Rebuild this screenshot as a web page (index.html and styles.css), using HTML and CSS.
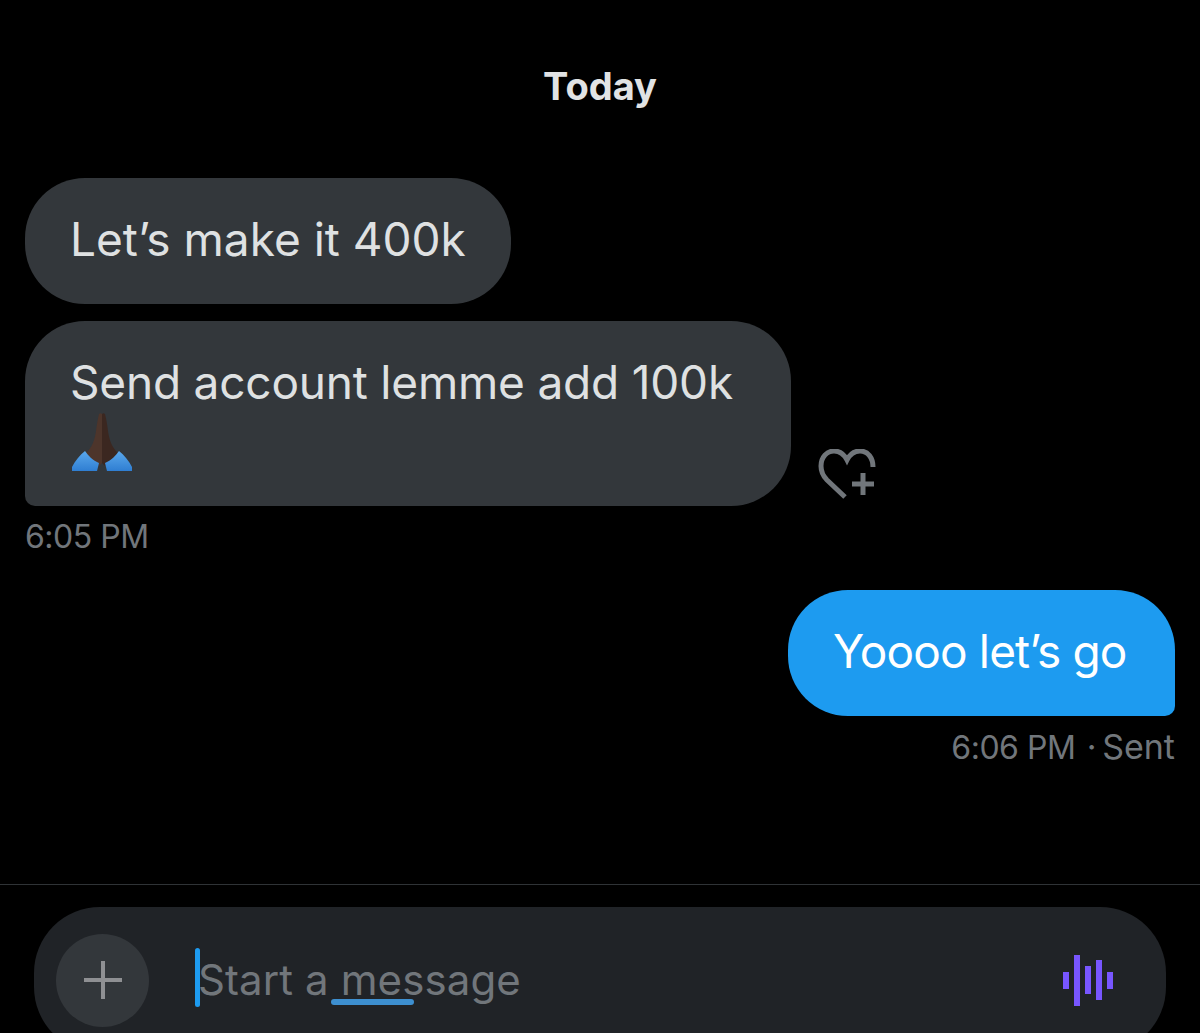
FILE: index.html
```html
<!DOCTYPE html>
<html>
<head>
  <title>Messages</title>
  <link rel="stylesheet" href="styles.css">
</head>
<body>
  <div class="chat">
    <div class="day">Today</div>

    <!-- Received -->
    <div class="msg-row first">
      <div class="bubble in">Let’s make it 400k</div>
    </div>
    <div class="msg-row second">
      <div class="bubble in last">
        Send account lemme add 100k
        <svg class="pray" viewBox="0 0 60 58" width="60" height="58">
          <defs>
            <linearGradient id="cuff" x1="0" y1="0" x2="0" y2="1">
              <stop offset="0" stop-color="#5aa8ec"/>
              <stop offset="1" stop-color="#2f7ed2"/>
            </linearGradient>
          </defs>
          <path fill="#4d352b" d="M27 1C28 0 29 0 30 1V50L27 53 14 40C20 35 23 26 24 18 25 10 26 5 27 1z"/>
          <path fill="#3b2720" d="M33 1C32 0 31 0 30 1V50L33 53 46 40C40 35 37 26 36 18 35 10 34 5 33 1z"/>
          <path fill="url(#cuff)" d="M0 58V54C3 48 8 42 13 38 16 42 20 47 27 50L25 58z"/>
          <path fill="url(#cuff)" d="M60 58V54C57 48 52 42 47 38 44 42 40 47 33 50L35 58z"/>
        </svg>
      </div>
      <svg class="react" viewBox="0 0 60 50" width="60" height="50">
        <path fill="none" stroke="#71767b" stroke-width="5" d="M27 48L9 31C4 26 3 22 3 17 3 8 9 2 16 2c6 0 10 3 13 9 3-6 7-9 13-9 8 0 13 7 13 16"/>
        <path fill="none" stroke="#71767b" stroke-width="5" d="M34 35h22M45 24v22"/>
      </svg>
    </div>
    <div class="time">6:05 PM</div>

    <!-- Sent -->
    <div class="msg-row sent">
      <div class="bubble out">Yoooo let’s go</div>
    </div>
    <div class="time right">6:06 PM <span class="status">· Sent</span></div>
  </div>

  <div class="composer-wrap">
    <div class="composer">
      <div class="add-btn">
        <svg viewBox="0 0 40 40" width="40" height="40">
          <path fill="none" stroke="#8f9093" stroke-width="4" d="M1 20h38M20 1v38"/>
        </svg>
      </div>
      <div class="input">
        <span class="caret"></span>
        <span class="placeholder">Start a <span class="underlined">mes</span>sage</span>
      </div>
      <div class="voice">
        <span class="bar b1"></span>
        <span class="bar b2"></span>
        <span class="bar b3"></span>
        <span class="bar b4"></span>
        <span class="bar b1"></span>
      </div>
    </div>
  </div>
</body>
</html>
```

FILE: styles.css
```css
html, body {
  margin: 0;
  height: 1033px;
  overflow: hidden;
  background-color: #000;
  font-family: "Inter", "Liberation Sans", sans-serif;
}
.chat {
  height: 884px;
  padding: 0 25px 0 25px;
  box-sizing: border-box;
}
.day {
  padding-top: 64px;
  height: 113px;
  box-sizing: border-box;
  text-align: center;
  color: #e1e3e4;
  font-size: 38px;
  font-weight: 700;
  line-height: 44px;
}
.msg-row {
  display: flex;
  align-items: flex-end;
}
.msg-row.second {
  margin-top: 17px;
}
.msg-row.sent {
  justify-content: flex-end;
  margin-top: 35px;
}
.bubble {
  box-sizing: border-box;
  padding: 31px 45px 35px 45px;
  border-radius: 60px;
  font-size: 46px;
  line-height: 60px;
  white-space: nowrap;
}
.first .bubble {
  margin-top: 65px;
}
.in {
  background-color: #33373b;
  color: #dfe1e2;
}
.in.last {
  width: 766px;
  height: 185px;
  letter-spacing: -0.2px;
  border-radius: 60px 60px 60px 10px;
}
.out {
  width: 387px;
  height: 126px;
  letter-spacing: -0.85px;
  background-color: #1d9bf0;
  color: #fff;
  border-radius: 60px 60px 10px 60px;
}
.pray {
  display: block;
  margin-left: 2px;
  margin-top: 1px;
}
.react {
  margin: 0 0 7px 27px;
}
.time {
  margin-top: 13px;
  color: #71767b;
  font-size: 32px;
  line-height: 36px;
  letter-spacing: -0.5px;
}
.time.right {
  text-align: right;
}
.status {
  margin-left: 3px;
  font-size: 34px;
  letter-spacing: 0;
  word-spacing: -4px;
}
.composer-wrap {
  border-top: 1px solid #2f3336;
  padding: 22px 34px 0 34px;
}
.composer {
  display: flex;
  align-items: center;
  height: 146px;
  padding: 0 53px 0 22px;
  background-color: #202327;
  border-radius: 66px;
}
.add-btn {
  display: flex;
  align-items: center;
  justify-content: center;
  width: 93px;
  height: 93px;
  border-radius: 50%;
  background-color: #33373b;
}
.input {
  flex: 1;
  display: flex;
  align-items: center;
  margin-left: 46px;
}
.caret {
  width: 5px;
  height: 59px;
  margin-top: -5px;
  border-radius: 3px;
  background-color: #1d9bf0;
}
.placeholder {
  margin-left: -2px;
  color: #71767b;
  font-size: 42px;
  line-height: 58px;
  letter-spacing: 0.1px;
}
/* autocorrect line sits over the text */
.underlined {
  position: relative;
}
.underlined::after {
  content: "";
  position: absolute;
  left: -10px;
  bottom: 0;
  width: 83px;
  height: 6px;
  border-radius: 3px;
  background-color: #3d8fd0;
}
.voice {
  display: flex;
  align-items: center;
  gap: 5px;
}
.bar {
  display: block;
  width: 6px;
  background-color: #7856ff;
}
.b1 { height: 17px; }
.b2 { height: 51px; }
.b3 { height: 28px; }
.b4 { height: 40px; }
```
